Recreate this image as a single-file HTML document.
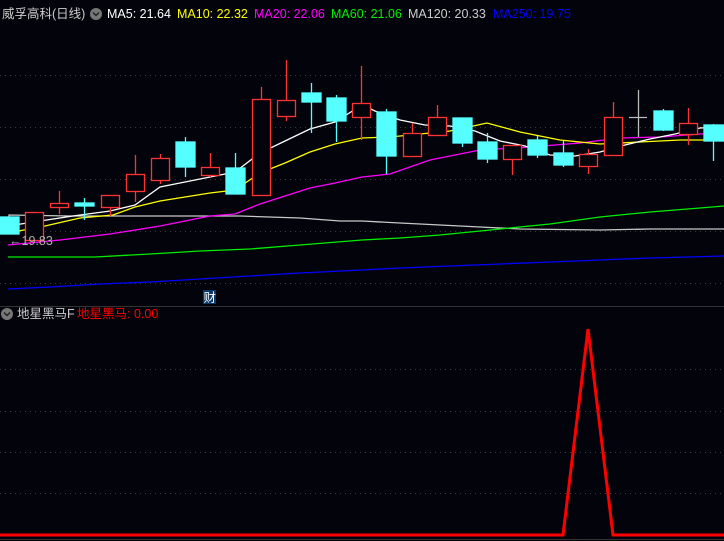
<!DOCTYPE html>
<html><head><meta charset="utf-8"><style>
html,body{margin:0;padding:0;background:#03030b;width:724px;height:541px;overflow:hidden}
svg{display:block}
text{font-family:"Liberation Sans","Noto Sans CJK SC",sans-serif;font-size:12.5px}
</style></head><body>
<svg width="724" height="541" viewBox="0 0 724 541" xmlns="http://www.w3.org/2000/svg">
<rect width="724" height="541" fill="#03030b"/>
<g stroke="#3a3a3a" stroke-dasharray="1 4" stroke-width="1">
<line x1="0" y1="75.5" x2="724" y2="75.5"/><line x1="0" y1="127.5" x2="724" y2="127.5"/>
<line x1="0" y1="179.5" x2="724" y2="179.5"/><line x1="0" y1="231.5" x2="724" y2="231.5"/>
<line x1="0" y1="283.5" x2="724" y2="283.5"/>
<line x1="0" y1="369.5" x2="724" y2="369.5"/>
<line x1="0" y1="411.5" x2="724" y2="411.5"/><line x1="0" y1="452.5" x2="724" y2="452.5"/>
<line x1="0" y1="493.5" x2="724" y2="493.5"/>
</g>
<line x1="0" y1="306.5" x2="724" y2="306.5" stroke="#333" />
<line x1="0" y1="539.5" x2="724" y2="539.5" stroke="#333" />
<g fill="none" stroke-width="1.3">
<polyline stroke="#c8c8c8" points="9,218 9,215 70,216 240,216 300,218 340,221 362,221 400,223 440,225 480,227 520,229 600,230 650,229 724,229"/>
<polyline stroke="#00ee00" points="8,257 95,257 150,254 200,251 250,249 300,245 362,240 400,238 440,235 500,229 550,224 600,217 650,212 700,208 724,206"/>
<polyline stroke="#0000ff" points="8,289 50,287 100,284 150,282 200,279 250,276 300,273 362,270 400,268 450,266 500,264 550,262 600,260 650,258 724,256"/>
<polyline stroke="#ff00ff" points="8,245 60,240 110,234 160,226 210,216 235,214 260,204 285,196 310,188 335,183 362,177 390,174 430,160 480,150 530,147 580,143 620,138 660,137 700,134 724,133"/>
<polyline stroke="#ffff00" points="8,233 45,226 80,218 113,215 135,207 160,201 185,197 210,193 235,190 260,173 285,163 310,152 335,144 362,138 390,137 420,134 450,131 487,123 520,132 560,140 600,144 640,142 680,140 724,140"/>
<polyline stroke="#ffffff" points="8,226 40,221 73,216 110,211 135,205 160,187 185,182 210,177 235,172 260,153 285,141 310,129 335,122 362,105 375,111 400,120 425,125 450,126 475,131 500,141 525,146 550,155 575,156 600,152 625,145 650,139 675,134 700,128 724,127"/>
</g>
<g stroke="#ff3333" stroke-width="1.3" fill="#03030b">
<rect x="25.5" y="212.5" width="18" height="28"/>
<line x1="59.5" y1="191" x2="59.5" y2="203"/><line x1="59.5" y1="207" x2="59.5" y2="214"/><rect x="50.5" y="203.5" width="18" height="4"/>
<line x1="110.5" y1="207" x2="110.5" y2="216"/><rect x="101.5" y="195.5" width="18" height="12"/>
<line x1="135.5" y1="155" x2="135.5" y2="174"/><line x1="135.5" y1="191" x2="135.5" y2="202"/><rect x="126.5" y="174.5" width="18" height="17"/>
<line x1="160.5" y1="154" x2="160.5" y2="158"/><line x1="160.5" y1="180" x2="160.5" y2="184"/><rect x="151.5" y="158.5" width="18" height="22"/>
<line x1="210.5" y1="153" x2="210.5" y2="167"/><line x1="210.5" y1="175" x2="210.5" y2="177"/><rect x="201.5" y="167.5" width="18" height="8"/>
<line x1="261.5" y1="87" x2="261.5" y2="99"/><rect x="252.5" y="99.5" width="18" height="96"/>
<line x1="286.5" y1="60" x2="286.5" y2="100"/><line x1="286.5" y1="116" x2="286.5" y2="121"/><rect x="277.5" y="100.5" width="18" height="16"/>
<line x1="361.5" y1="66" x2="361.5" y2="103"/><line x1="361.5" y1="117" x2="361.5" y2="140"/><rect x="352.5" y="103.5" width="18" height="14"/>
<line x1="412.5" y1="123" x2="412.5" y2="133"/><rect x="403.5" y="133.5" width="18" height="23"/>
<line x1="437.5" y1="105" x2="437.5" y2="117"/><rect x="428.5" y="117.5" width="18" height="18"/>
<line x1="512.5" y1="159" x2="512.5" y2="175"/><rect x="503.5" y="145.5" width="18" height="14"/>
<line x1="588.5" y1="149" x2="588.5" y2="154"/><line x1="588.5" y1="166" x2="588.5" y2="174"/><rect x="579.5" y="154.5" width="18" height="12"/>
<line x1="613.5" y1="102" x2="613.5" y2="117"/><rect x="604.5" y="117.5" width="18" height="38"/>
<line x1="688.5" y1="108" x2="688.5" y2="123"/><line x1="688.5" y1="134" x2="688.5" y2="145"/><rect x="679.5" y="123.5" width="18" height="11"/>
</g>
<g stroke="#55ffff" stroke-width="1.3" fill="#55ffff">
<rect x="0" y="217" width="19" height="17"/>
<line x1="84.5" y1="198" x2="84.5" y2="220"/><rect x="75" y="203" width="19" height="3"/>
<line x1="185.5" y1="137" x2="185.5" y2="177"/><rect x="176" y="142" width="19" height="25"/>
<line x1="235.5" y1="153" x2="235.5" y2="194"/><rect x="226" y="168" width="19" height="26"/>
<line x1="311.5" y1="83" x2="311.5" y2="133"/><rect x="302" y="93" width="19" height="9"/>
<line x1="336.5" y1="95" x2="336.5" y2="142"/><rect x="327" y="98" width="19" height="23"/>
<line x1="386.5" y1="109" x2="386.5" y2="174"/><rect x="377" y="112" width="19" height="44"/>
<line x1="462.5" y1="118" x2="462.5" y2="147"/><rect x="453" y="118" width="19" height="25"/>
<line x1="487.5" y1="133" x2="487.5" y2="163"/><rect x="478" y="142" width="19" height="17"/>
<line x1="537.5" y1="136" x2="537.5" y2="158"/><rect x="528" y="140" width="19" height="15"/>
<line x1="563.5" y1="141" x2="563.5" y2="167"/><rect x="554" y="153" width="19" height="12"/>
<line x1="663.5" y1="109" x2="663.5" y2="131"/><rect x="654" y="111" width="19" height="19"/>
<line x1="713.5" y1="124" x2="713.5" y2="161"/><rect x="704" y="125" width="20" height="16"/>
</g>
<g stroke="#bbbbbb" stroke-width="1.3"><line x1="638.5" y1="90" x2="638.5" y2="137"/><line x1="629" y1="117.5" x2="647" y2="117.5"/></g>
<text x="9" y="245" fill="#b0b0b0" font-size="13">←19.83</text>
<rect x="203" y="290" width="13" height="14" fill="#0b3a6a"/>
<text x="203.5" y="302" fill="#ffffff" font-size="12">财</text>
<text x="2" y="18" fill="#cccccc">威孚高科(日线)</text>
<circle cx="96" cy="14" r="6" fill="#777"/><path d="M93,12.5 L96,15.5 L99,12.5" stroke="#222" stroke-width="1.5" fill="none"/>
<text x="107" y="18" fill="#ffffff">MA5: 21.64</text>
<text x="177" y="18" fill="#ffff00">MA10: 22.32</text>
<text x="254" y="18" fill="#ff00ff">MA20: 22.06</text>
<text x="331" y="18" fill="#00ee00">MA60: 21.06</text>
<text x="408" y="18" fill="#cccccc">MA120: 20.33</text>
<text x="493" y="18" fill="#0000ff">MA250: 19.75</text>
<circle cx="7" cy="314" r="6" fill="#777"/><path d="M4,312.5 L7,315.5 L10,312.5" stroke="#222" stroke-width="1.5" fill="none"/>
<text x="17" y="318" fill="#cccccc" font-size="12">地星黑马F</text>
<text x="77" y="318" fill="#ff0000" font-size="12">地星黑马: 0.00</text>
<polyline fill="none" stroke="#ff0000" stroke-width="3" points="0,535 563,535 588,329 613,535 724,535"/>
</svg>
</body></html>
